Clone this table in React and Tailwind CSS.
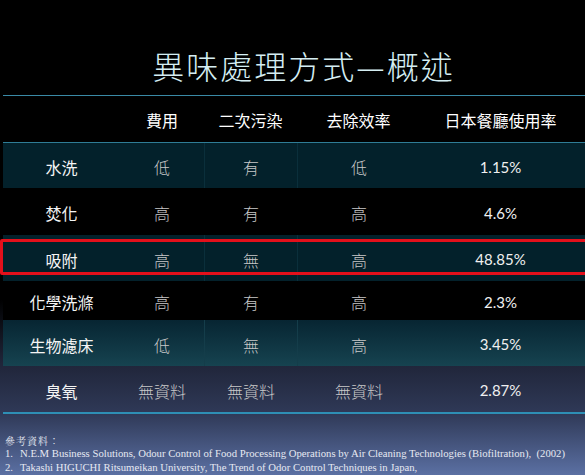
import React from "react";

const cjk = { fontFamily: '"Noto Sans CJK TC", "Noto Sans", sans-serif' };

const rows = [
  { name: "水洗", cost: "低", second: "有", eff: "低", rate: "1.15%", bg: "bg-[#03212b]", h: "h-[45px]", line: "border-[#0a2f3b]" },
  { name: "焚化", cost: "高", second: "有", eff: "高", rate: "4.6%", bg: "bg-black", h: "h-[47px]", line: "border-black" },
  { name: "吸附", cost: "高", second: "無", eff: "高", rate: "48.85%", bg: "bg-[#03212b]", h: "h-[46px]", line: "border-[#0a2f3b]", mark: true },
  { name: "化學洗滌", cost: "高", second: "有", eff: "高", rate: "2.3%", bg: "bg-black", h: "h-[39px]", line: "border-black" },
  { name: "生物濾床", cost: "低", second: "無", eff: "高", rate: "3.45%", bg: "bg-[linear-gradient(180deg,#072532,#164350)]", h: "h-[46px]", line: "border-[#143d4a]" },
  { name: "臭氧", cost: "無資料", second: "無資料", eff: "無資料", rate: "2.87%", bg: "bg-transparent", h: "h-[46px]", line: "border-transparent" },
];

function Row({ r }) {
  return (
    <div className={`relative grid grid-cols-[117px_84px_93px_123px_1fr] items-center ${r.bg} ${r.h}`} style={cjk}>
      <div className="text-center text-[16px] text-[#f4f4f4] pt-[3px]">{r.name}</div>
      <div className="h-full flex items-center justify-center text-[16px] text-[#c9c9c9] font-light pt-[3px]">{r.cost}</div>
      <div className={`h-full flex items-center justify-center border-l ${r.line} text-[16px] text-[#c9c9c9] font-light pt-[3px]`}>{r.second}</div>
      <div className={`h-full flex items-center justify-center border-l ${r.line} text-[16px] text-[#c9c9c9] font-light pt-[3px]`}>{r.eff}</div>
      <div
        className="h-full flex items-center justify-center text-[15px] text-[#f0f0f0] pt-[3px] pr-[4px]"
        style={{ fontFamily: "Lato, sans-serif" }}
      >
        {r.rate}
      </div>
      {r.mark && (
        <div className="absolute left-[-3px] right-[-6px] top-[4px] bottom-[6px] border-[3px] border-[#e3101b] rounded-[2px] pointer-events-none" />
      )}
    </div>
  );
}

export default function App() {
  return (
    <div className="w-full h-[475px] overflow-hidden bg-[linear-gradient(180deg,#000_0%,#000_63%,#1f2438_76%,#2f3957_87%,#5b70a3_100%)]">
      <div className="h-[95px] flex items-end justify-center pb-[14px] pl-[22px]">
        <h1
          className="text-[32px] leading-none tracking-[2px] text-[#d5eef3] font-light"
          style={{ fontFamily: '"Noto Sans CJK TC", "Noto Sans CJK SC", serif' }}
        >
          異味處理方式—概述
        </h1>
      </div>
      <div className="ml-[3px] border-t border-[#3a8aa6]">
        <div className="grid grid-cols-[117px_84px_93px_123px_1fr] h-[46px] items-center text-[16px] text-white pt-[2px]" style={cjk}>
          <div />
          <div className="text-center">費用</div>
          <div className="text-center">二次污染</div>
          <div className="text-center">去除效率</div>
          <div className="text-center pr-[4px]">日本餐廳使用率</div>
        </div>
        <div className="border-t border-[#2f7d96]">
          {rows.map((r) => (
            <Row key={r.name} r={r} />
          ))}
        </div>
        <div className="border-t-2 border-[#2e8fb5]" />
      </div>
      <div className="px-[5px] pt-[21px] text-[#e6e9f2]">
        <div className="text-[10px] leading-[12px] tracking-[1px]" style={{ fontFamily: '"Noto Serif CJK TC", "Noto Sans CJK TC", serif' }}>
          參考資料：
        </div>
        <div className="text-[10.7px] leading-[13.5px]" style={{ fontFamily: '"Liberation Serif", serif' }}>
          <div className="flex">
            <span className="w-[15px]">1.</span>
            <span>N.E.M Business Solutions, Odour Control of Food Processing Operations by Air Cleaning Technologies (Biofiltration),&nbsp; (2002)</span>
          </div>
          <div className="flex">
            <span className="w-[15px]">2.</span>
            <span>Takashi HIGUCHI Ritsumeikan University, The Trend of Odor Control Techniques in Japan,</span>
          </div>
        </div>
      </div>
    </div>
  );
}
